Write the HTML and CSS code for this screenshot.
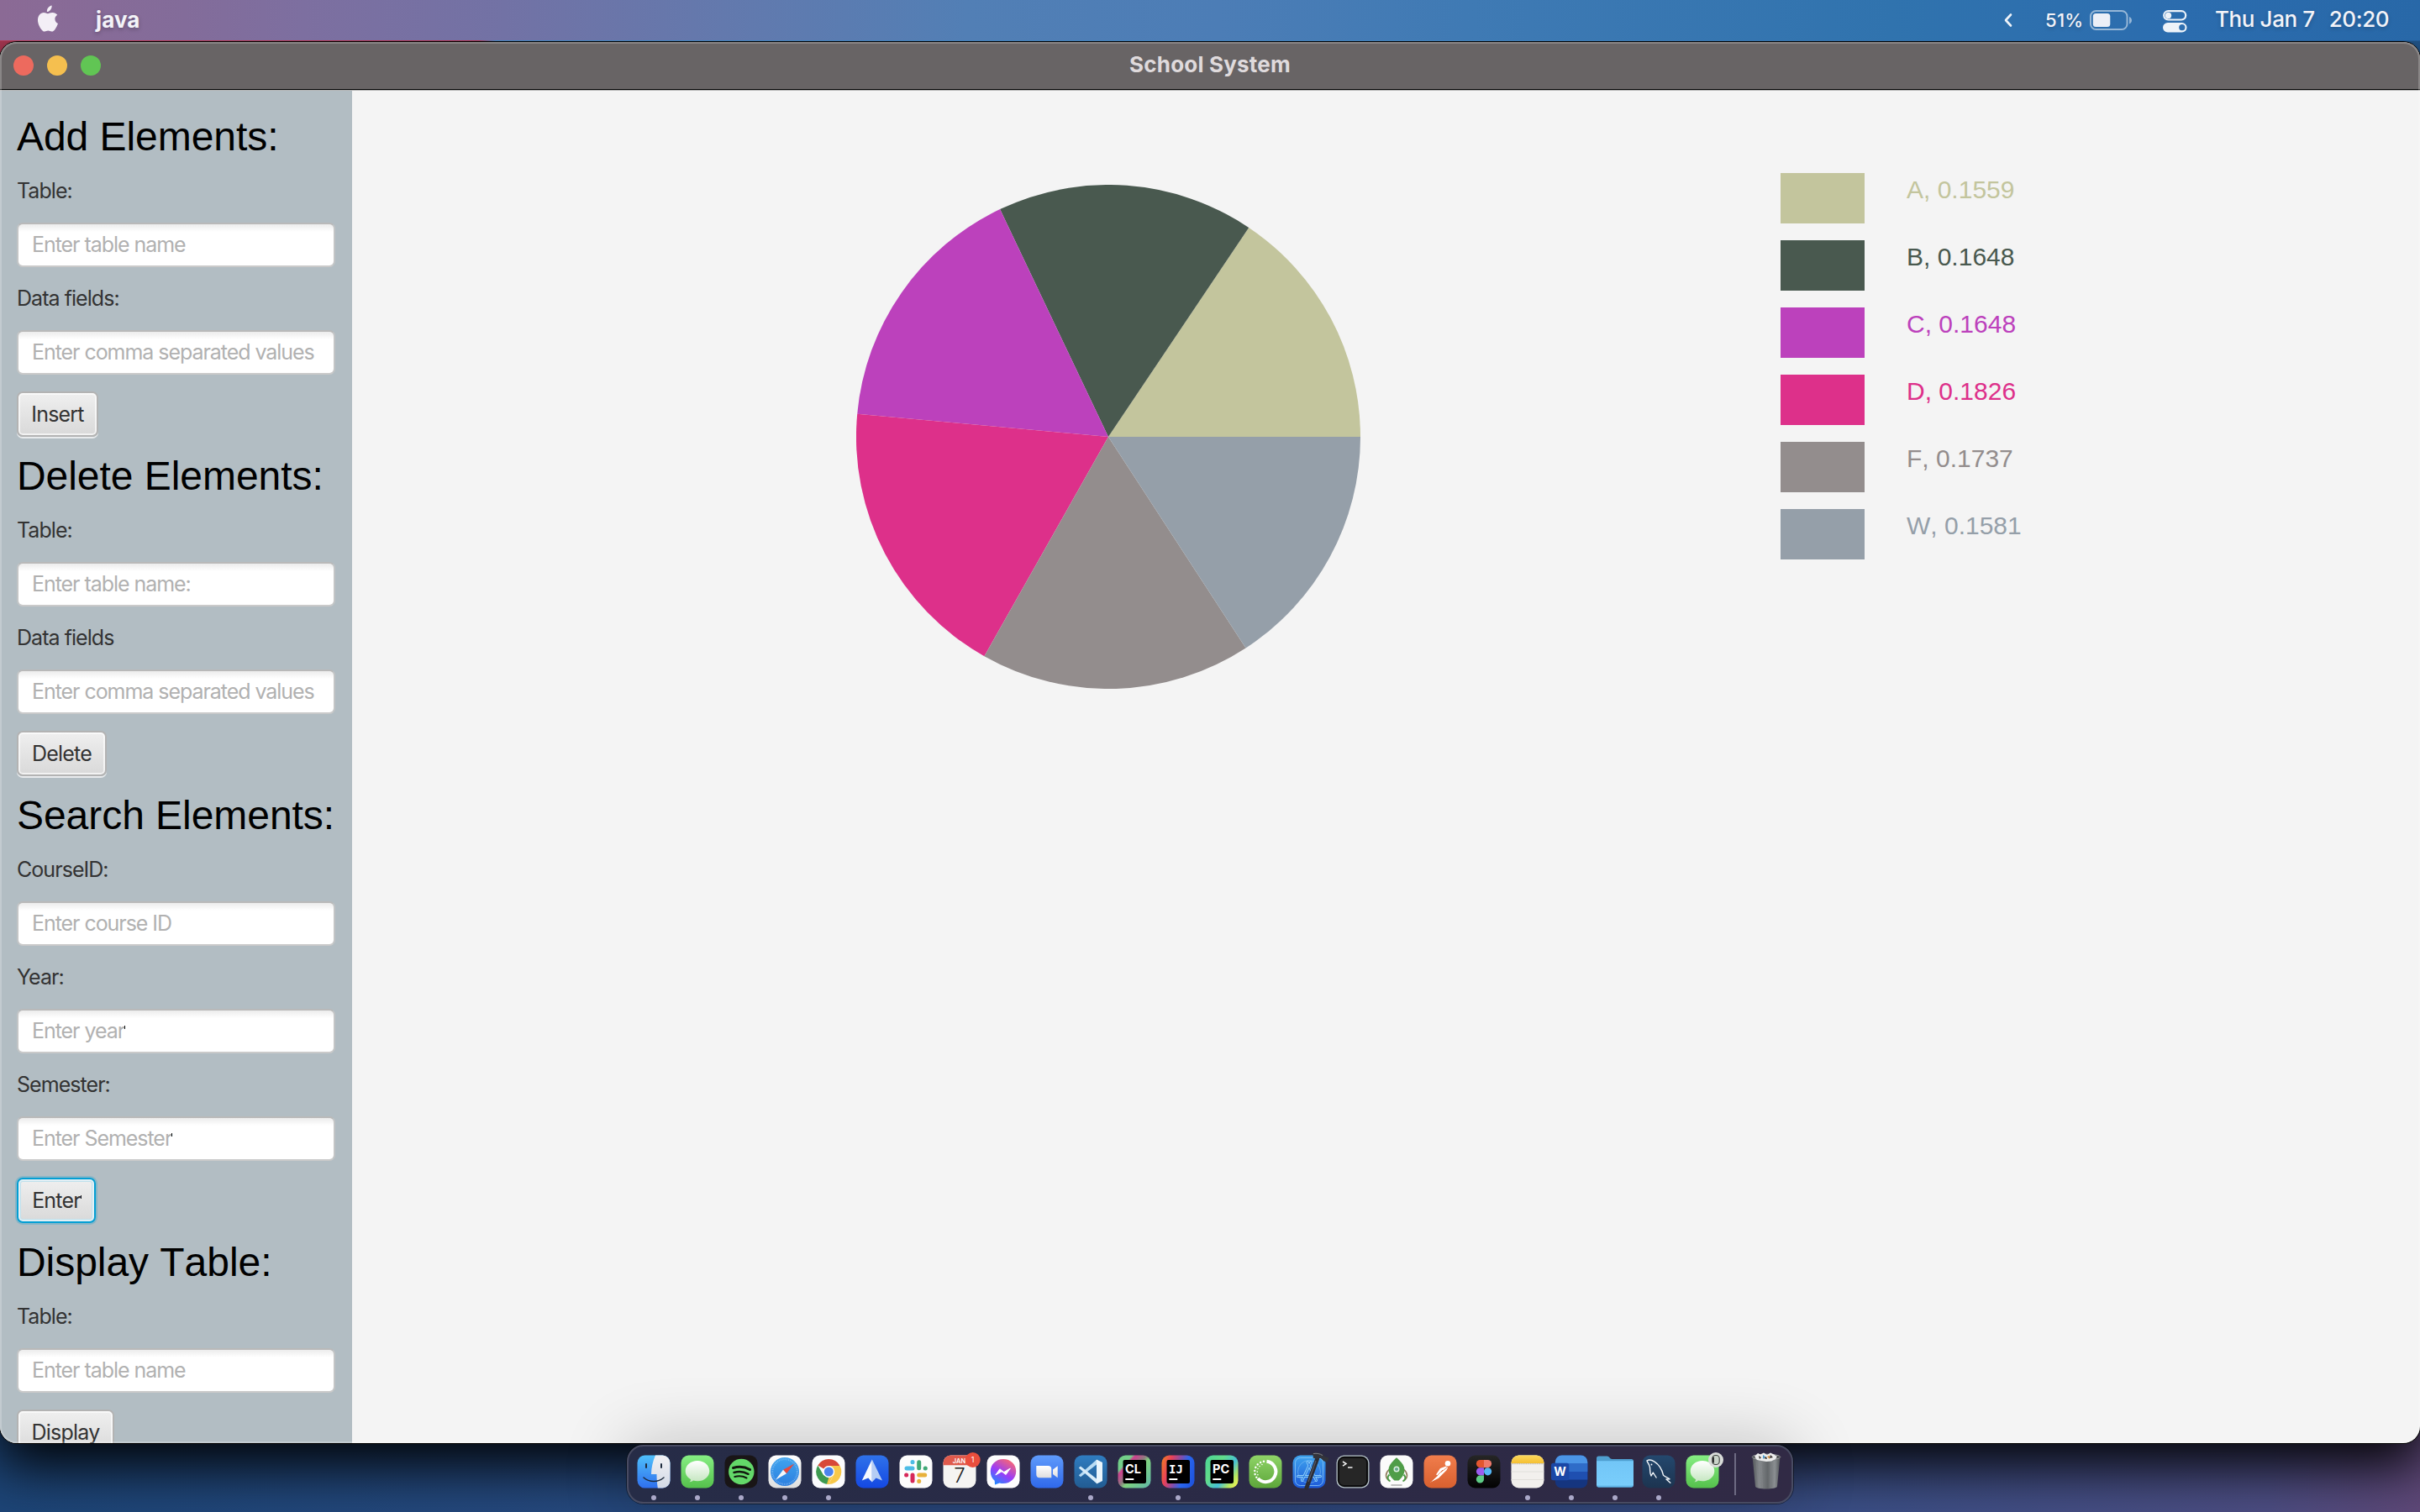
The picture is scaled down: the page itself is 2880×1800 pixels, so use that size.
FILE: index.html
```html
<!DOCTYPE html>
<html lang="en">
<head>
<meta charset="utf-8">
<title>School System</title>
<link rel="stylesheet" href="styles.css">
</head>
<body>
<svg class="defs" width="0" height="0">
  <defs>
    <linearGradient id="g-finder" x2="0" y2="1"><stop stop-color="#4fc0fb"/><stop offset="1" stop-color="#2f6fee"/></linearGradient>
    <linearGradient id="g-face" x2="0" y2="1"><stop stop-color="#f1f1f4"/><stop offset="1" stop-color="#d3dae6"/></linearGradient>
    <linearGradient id="g-msg" x2="0" y2="1"><stop stop-color="#86ee83"/><stop offset="1" stop-color="#55c14c"/></linearGradient>
    <linearGradient id="g-bubble" x2="0" y2="1"><stop stop-color="#fff"/><stop offset="1" stop-color="#c4e6c0"/></linearGradient>
    <linearGradient id="g-white" x2="0" y2="1"><stop stop-color="#fff"/><stop offset="1" stop-color="#dedede"/></linearGradient>
    <linearGradient id="g-safari" x2="0" y2="1"><stop stop-color="#3fa4ee"/><stop offset="1" stop-color="#2d7fe0"/></linearGradient>
    <linearGradient id="g-spark" x2="0" y2="1"><stop stop-color="#2f72ea"/><stop offset="1" stop-color="#1448e2"/></linearGradient>
    <linearGradient id="g-messenger" x1=".2" y1="1" x2=".8" y2="0"><stop stop-color="#1a8cff"/><stop offset=".45" stop-color="#9a3cf8"/><stop offset="1" stop-color="#ff6a6a"/></linearGradient>
    <linearGradient id="g-zoom" x2="0" y2="1"><stop stop-color="#5f9bfb"/><stop offset="1" stop-color="#2f68ea"/></linearGradient>
    <linearGradient id="g-vs" x2="0" y2="1"><stop stop-color="#2f7cc0"/><stop offset="1" stop-color="#225c92"/></linearGradient>
    <linearGradient id="g-cl" x1="0" y1="0" x2="1" y2=".9"><stop stop-color="#6fce86"/><stop offset=".24" stop-color="#74cf8a"/><stop offset=".3" stop-color="#cf3f8f"/><stop offset=".48" stop-color="#8f7a80"/><stop offset=".58" stop-color="#7fd27f"/><stop offset="1" stop-color="#62b9a6"/></linearGradient>
    <linearGradient id="g-ij" x1="0" y1=".3" x2="1" y2=".6"><stop stop-color="#f0702e"/><stop offset=".22" stop-color="#e8405a"/><stop offset=".5" stop-color="#7b4fb0"/><stop offset=".7" stop-color="#2a66ee"/><stop offset="1" stop-color="#1f55e0"/></linearGradient>
    <linearGradient id="g-pc" x1="0" y1=".2" x2="1" y2=".9"><stop stop-color="#4fd694"/><stop offset=".3" stop-color="#62dc8a"/><stop offset=".6" stop-color="#45c0d6"/><stop offset=".82" stop-color="#b4e860"/><stop offset="1" stop-color="#f6f254"/></linearGradient>
    <linearGradient id="g-ana" x2="0" y2="1"><stop stop-color="#8fd467"/><stop offset="1" stop-color="#5da63a"/></linearGradient>
    <linearGradient id="g-xcode" x2="0" y2="1"><stop stop-color="#3fa4ee"/><stop offset="1" stop-color="#1c58d8"/></linearGradient>
    <linearGradient id="g-postman" x2="0" y2="1"><stop stop-color="#f07d4c"/><stop offset="1" stop-color="#d9602f"/></linearGradient>
    <linearGradient id="g-black" x2="0" y2="1"><stop stop-color="#262626"/><stop offset="1" stop-color="#020202"/></linearGradient>
    <linearGradient id="g-yellow" x2="0" y2="1"><stop stop-color="#fcd95c"/><stop offset="1" stop-color="#f5bf32"/></linearGradient>
    <linearGradient id="g-folder" x2="0" y2="1"><stop stop-color="#72c6f7"/><stop offset=".9" stop-color="#79cdfb"/><stop offset="1" stop-color="#55abdf"/></linearGradient>
    <linearGradient id="g-mysql" x2="0" y2="1"><stop stop-color="#24486e"/><stop offset="1" stop-color="#1c3450"/></linearGradient>
    <linearGradient id="g-trash"><stop stop-color="#55595c"/><stop offset=".25" stop-color="#85898c"/><stop offset=".55" stop-color="#63676a"/><stop offset=".8" stop-color="#8a8e91"/><stop offset="1" stop-color="#54585b"/></linearGradient>
  </defs>
</svg>
<div class="desktop">
  <header class="menubar">
    <svg class="apple" width="28" height="34" viewBox="0 0 28 34"><path fill="#f3eff6" d="M18.600.5c.3 2.100-.5 4-1.700 5.400-1.200 1.400-2.700 2.100-4 2-.2-2 .6-3.900 1.800-5.200C15.800 1.500 17.300.700 18.600.5zM25.300 11.800c-1.900 1.200-3 2.900-2.900 5 .1 2.600 1.500 4.400 3.600 5.300-.8 2.400-2 4.700-3.500 6.800-1 1.400-2.300 2.700-4 2.700-1.600 0-2.200-1-4.200-1s-2.700 1-4.200 1c-1.700 0-3-1.400-4.100-2.900C2.600 24.200 1.100 18.500 2.500 14.300c1-3.100 3.600-5.200 6.500-5.300 1.900 0 3.500 1.200 4.900 1.200 1.300 0 3.100-1.300 5.600-1.200 2.300.1 4.500 1.100 5.800 2.800z"/></svg>
    <span class="app-name">java</span>
    <div class="status">
      <svg class="chevron" width="12" height="20" viewBox="0 0 12 20"><path d="M9 3.500 3 10l6 6.500" fill="none" stroke="#eef3f9" stroke-width="2.600" stroke-linecap="round" stroke-linejoin="round"/></svg>
      <span class="percent">51%</span>
      <svg class="battery" width="52" height="26" viewBox="0 0 52 26"><rect x="2" y="2" width="43.500" height="22" rx="6.500" fill="none" stroke="#fff" stroke-opacity=".5" stroke-width="2"/><rect x="4.800" y="5" width="20.500" height="16" rx="3.500" fill="#eceff7"/><path d="M48 9c4 1.500 4 7 0 8.500z" fill="#fff" fill-opacity=".5"/></svg>
      <svg class="control" width="30" height="28" viewBox="0 0 30 28"><rect x="2.200" y="2.200" width="26" height="10.300" rx="5.150" fill="none" stroke="#eef3f9" stroke-width="2.200"/><circle cx="7.500" cy="7.400" r="3.700" fill="#eef3f9"/><rect x="1" y="16" width="28.500" height="11.500" rx="5.750" fill="#eef3f9"/><circle cx="23.800" cy="21.700" r="3.600" fill="#2f6fb0"/></svg>
      <span class="clock"><span>Thu Jan 7</span><span>20:20</span></span>
    </div>
  </header>

  <main class="window">
    <div class="titlebar">
      <div class="lights"><i class="light red"></i><i class="light yellow"></i><i class="light green"></i></div>
      <span class="title">School System</span>
    </div>
    <div class="content">
      <aside class="sidebar">
        <h2>Add Elements:</h2>
        <label>Table:</label>
        <div class="field"><span>Enter table name</span></div>
        <label>Data fields:</label>
        <div class="field"><span>Enter comma separated values</span></div>
        <button class="btn btn-insert">Insert</button>
        <h2>Delete Elements:</h2>
        <label>Table:</label>
        <div class="field"><span>Enter table name:</span></div>
        <label>Data fields</label>
        <div class="field"><span>Enter comma separated values</span></div>
        <button class="btn btn-delete">Delete</button>
        <h2>Search Elements:</h2>
        <label>CourseID:</label>
        <div class="field"><span>Enter course ID</span></div>
        <label>Year:</label>
        <div class="field"><span class="tick">Enter year</span></div>
        <label>Semester:</label>
        <div class="field"><span class="tick">Enter Semester</span></div>
        <button class="btn btn-enter focused"><span class="tick">Enter</span></button>
        <h2>Display Table:</h2>
        <label>Table:</label>
        <div class="field"><span>Enter table name</span></div>
        <button class="btn btn-display">Display</button>
      </aside>
      <section class="chart">
        <svg class="pie" width="600" height="600" viewBox="0 0 600 600">
          <path fill="#c3c59d" d="M300 300H600A300 300 0 0 0 467.200 50.900z"/>
          <path fill="#49594f" d="M300 300 467.200 50.900A300 300 0 0 0 171.100 29.100z"/>
          <path fill="#bc41bc" d="M300 300 171.100 29.100A300 300 0 0 0 1.200 272.700z"/>
          <path fill="#dd308a" d="M300 300 1.200 272.700A300 300 0 0 0 152.400 561.200z"/>
          <path fill="#938d8d" d="M300 300 152.400 561.200A300 300 0 0 0 463.600 551.500z"/>
          <path fill="#959fa9" d="M300 300 463.600 551.500A300 300 0 0 0 600 300z"/>
        </svg>
        <ul class="legend">
          <li class="grade-a"><i></i><span>A, 0.1559</span></li>
          <li class="grade-b"><i></i><span>B, 0.1648</span></li>
          <li class="grade-c"><i></i><span>C, 0.1648</span></li>
          <li class="grade-d"><i></i><span>D, 0.1826</span></li>
          <li class="grade-f"><i></i><span>F, 0.1737</span></li>
          <li class="grade-w"><i></i><span>W, 0.1581</span></li>
        </ul>
      </section>
    </div>
  </main>

  <nav class="dock">
    <!-- Finder -->
    <div class="app running"><svg viewBox="0 0 52 52"><rect x="6.500" y="6.500" width="39" height="39" rx="9" fill="url(#g-finder)"/><path d="M28 6.500H36.500a9 9 0 0 1 9 9V36.500a9 9 0 0 1-9 9H30.800C30 40 29.500 35 29.500 29H23C23.200 21 25 13 28 6.500z" fill="url(#g-face)"/><path d="M17 17v4M35 17v4" stroke="#1d2a3c" stroke-width="2" stroke-linecap="round"/><path d="M14 33c7 6 17 6 24 0" fill="none" stroke="#1d2a3c" stroke-width="1.500" stroke-linecap="round"/></svg></div>
    <!-- Messages -->
    <div class="app running"><svg viewBox="0 0 52 52"><rect x="6.500" y="6.500" width="39" height="39" rx="9" fill="url(#g-msg)"/><path d="M26 13c8 0 14.300 5.400 14.300 12.200S34 37.300 26 37.300c-1.800 0-3.400-.2-5-.7-1.200 1-2.600 1.700-4.500 1.800.9-.9 1.500-2 1.600-3.200-3.900-2.200-6.400-5.900-6.400-10C11.700 18.400 18 13 26 13z" fill="url(#g-bubble)"/></svg></div>
    <!-- Spotify -->
    <div class="app running"><svg viewBox="0 0 52 52"><rect x="6.500" y="6.500" width="39" height="39" rx="9" fill="#191516"/><circle cx="26.300" cy="26" r="15.200" fill="#63d869"/><path d="M16.500 21.500c6.500-1.900 14-1.300 20 2" fill="none" stroke="#12180f" stroke-width="3" stroke-linecap="round"/><path d="M17.500 27c5.500-1.500 12-1 17 1.800" fill="none" stroke="#12180f" stroke-width="2.500" stroke-linecap="round"/><path d="M18.300 32c4.700-1.200 10-.8 14.200 1.500" fill="none" stroke="#12180f" stroke-width="2" stroke-linecap="round"/></svg></div>
    <!-- Safari -->
    <div class="app running"><svg viewBox="0 0 52 52"><rect x="6.500" y="6.500" width="39" height="39" rx="9" fill="url(#g-white)"/><circle cx="26" cy="26" r="17" fill="url(#g-safari)"/><circle cx="26" cy="26" r="14.800" fill="none" stroke="#cfe6fb" stroke-width="2" stroke-opacity=".6" stroke-dasharray=".6 1.340"/><path d="M37.300 16.500 28 28.200 24 23.800z" fill="#e8493c"/><path d="M15 35.800 24 23.800l4 4.400z" fill="#f5f7fa"/></svg></div>
    <!-- Chrome -->
    <div class="app running"><svg viewBox="0 0 52 52"><rect x="6.500" y="6.500" width="39" height="39" rx="9" fill="#fbfcfe"/><path d="M26.300 26 13.300 18.500A15 15 0 0 1 39.300 18.500z" fill="#d8493a"/><path d="M26.300 19h13.300A15 15 0 0 1 26.300 41l6-11.500z" fill="#f7c84a"/><path d="M13.300 18.500 20 30l6.300 3.200L26.300 41A15 15 0 0 1 13.300 18.500z" fill="#3d9a50"/><path d="M26.300 33 32.300 29.500 26 41h-2z" fill="#f7c84a"/><circle cx="26.300" cy="26" r="6.900" fill="#fff"/><circle cx="26.300" cy="26" r="5.500" fill="#4c84ee"/></svg></div>
    <!-- Spark -->
    <div class="app"><svg viewBox="0 0 52 52"><rect x="6.500" y="6.500" width="39" height="39" rx="9" fill="url(#g-spark)"/><path d="M25.800 11.500 13.800 36.500l7.500-3 4.500 5z" fill="#f6f9fe"/><path d="M25.800 11.500 38 36.500l-7.500-3-4.700 5z" fill="#b5cdf4"/></svg></div>
    <!-- Slack -->
    <div class="app"><svg viewBox="0 0 52 52"><rect x="6.500" y="6.500" width="39" height="39" rx="9" fill="#fdfdfd"/><g stroke-width="5" stroke-linecap="round"><path d="M15 22h7M22 14.600v.1" stroke="#4dbce6"/><path d="M29.700 14.800v7M37.200 22h.1" stroke="#40a876"/><path d="M29.700 30h7M29.700 37.300v.1" stroke="#e8b13c"/><path d="M22 30v7M14.600 30h.1" stroke="#d6285a"/></g></svg></div>
    <!-- Calendar -->
    <div class="app"><svg viewBox="0 0 52 52"><rect x="6.500" y="6.500" width="39" height="39" rx="9" fill="#f5f4f2"/><path d="M6.500 18.200v-2.700a9 9 0 0 1 9-9h21a9 9 0 0 1 9 9v2.700z" fill="#e05a4c"/><text x="25.500" y="15.600" class="cal-month">JAN</text><text x="26" y="39.300" class="cal-day">7</text><circle cx="41.700" cy="12" r="9" fill="#ea4e3d"/><text x="41.700" y="15.200" class="cal-badge">1</text></svg></div>
    <!-- Messenger -->
    <div class="app"><svg viewBox="0 0 52 52"><rect x="6.500" y="6.500" width="39" height="39" rx="9" fill="#fdfdfe"/><path d="M26 11c8.700 0 15.200 6.200 15.200 14.500S34.700 40 26 40c-1.600 0-3-.2-4.400-.6L16 41.600l-.3-4.800C12.500 34.200 10.800 30.200 10.800 25.500 10.800 17.200 17.300 11 26 11z" fill="url(#g-messenger)"/><path d="m16.800 30 5-7.200 5 3.700 7.500-4.500-5.200 7.500-5-3.700z" fill="#fff" stroke="#fff" stroke-linejoin="round"/></svg></div>
    <!-- Zoom -->
    <div class="app"><svg viewBox="0 0 52 52"><rect x="6.500" y="6.500" width="39" height="39" rx="9" fill="url(#g-zoom)"/><path d="M13.300 19h14a4 4 0 0 1 4 4v10.300h-14a4 4 0 0 1-4-4zM33 23.500l5.700-4.300v14L33 29z" fill="url(#g-white)"/></svg></div>
    <!-- Visual Studio Code -->
    <div class="app running"><svg viewBox="0 0 52 52"><rect x="6.500" y="6.500" width="39" height="39" rx="9" fill="url(#g-vs)"/><path d="M33 17.500 14 32.200l-2.200-2L33 11.700z" fill="#b9dcf4"/><path d="M33 34.500 14 19.600l-2.200 2L33 40z" fill="#d8ecf9"/><path d="m33 11.500 7 3.500v22l-7 3.500z" fill="#eaf5fc"/></svg></div>
    <!-- CLion -->
    <div class="app"><svg viewBox="0 0 52 52"><rect x="6.500" y="6.500" width="39" height="39" rx="9" fill="url(#g-cl)"/><rect x="12.500" y="12" width="27.500" height="28" rx="2" fill="#000"/><text x="15" y="27.700" class="jb">CL</text><path d="M15.300 35h10" stroke="#fff" stroke-width="2"/></svg></div>
    <!-- IntelliJ IDEA -->
    <div class="app running"><svg viewBox="0 0 52 52"><rect x="6.500" y="6.500" width="39" height="39" rx="9" fill="url(#g-ij)"/><rect x="12.500" y="12" width="27.500" height="28" rx="2" fill="#000"/><text x="15" y="27.700" class="jb mono">IJ</text><path d="M15.300 35h10" stroke="#fff" stroke-width="2"/></svg></div>
    <!-- PyCharm -->
    <div class="app"><svg viewBox="0 0 52 52"><rect x="6.500" y="6.500" width="39" height="39" rx="9" fill="url(#g-pc)"/><rect x="12.500" y="12" width="27.500" height="28" rx="2" fill="#000"/><text x="15" y="27.700" class="jb">PC</text><path d="M15.300 35h10" stroke="#fff" stroke-width="2"/></svg></div>
    <!-- Anaconda -->
    <div class="app"><svg viewBox="0 0 52 52"><rect x="6.500" y="6.500" width="39" height="39" rx="9" fill="url(#g-ana)"/><path d="M27.500 13.800A12.200 12.200 0 1 1 17 34" fill="none" stroke="#fff" stroke-width="4"/><path d="M24 13.800A12.200 12.200 0 0 0 15.500 33" fill="none" stroke="#fff" stroke-width="2.400" stroke-linecap="round" stroke-dasharray=".1 4"/><path d="M22 17.500A9.500 9.500 0 0 0 17.500 31" fill="none" stroke="#fff" stroke-width="1.500" stroke-linecap="round" stroke-dasharray=".1 3.500"/></svg></div>
    <!-- Xcode -->
    <div class="app"><svg viewBox="0 0 52 52"><rect x="6.500" y="6.500" width="39" height="39" rx="9" fill="url(#g-xcode)"/><rect x="9.500" y="9.500" width="33" height="33" rx="6" fill="none" stroke="#8cc8f6" stroke-width=".8"/><circle cx="26" cy="26" r="13.500" fill="none" stroke="#8cc8f6" stroke-width=".5"/><path d="m28 14.500-10.500 22M24 14.500l10.500 22M12.500 31.500h27" stroke="#8fd0fa" stroke-width="3" stroke-linecap="round"/><path d="m28 14.500-10.500 22M24 14.500l10.500 22M12.500 31.500h27" stroke="#2f80e2" stroke-width="1.200" stroke-linecap="round"/><path d="M23 45 35.500 11" stroke="#2b2c33" stroke-width="5" stroke-linecap="round"/><path d="m25 38 9-25" stroke="#575a66" stroke-width="1.200"/><path d="M28.500 4.500c5-2 10-1.500 14 1l2 2.500 5 1.500-1.500 5-4.500-1-3-3c-2-.8-3.500-.5-5 .5l-5-1.500c1-2 0-4-2-5z" fill="#33343b"/><path d="M31 4.600c4-.8 8 0 11 2" fill="none" stroke="#85878f" stroke-width=".9"/></svg></div>
    <!-- Terminal -->
    <div class="app"><svg viewBox="0 0 52 52"><rect x="6.500" y="6.500" width="39" height="39" rx="9" fill="#b9c6cc"/><rect x="7.800" y="7.800" width="36.400" height="36.400" rx="8" fill="#0c0c0d"/><rect x="10" y="10" width="32" height="32" rx="5" fill="#262626"/><path d="m14 14 4 2.600-4 2.600M20 21h5.500" fill="none" stroke="#f2f2f2" stroke-width="1.500"/></svg></div>
    <!-- MongoDB client -->
    <div class="app"><svg viewBox="0 0 52 52"><rect x="6.500" y="6.500" width="39" height="39" rx="9" fill="#fbfbfb"/><path d="M17 23.500c-5 5-4.500 10 .5 13.500M35 23.500c5 5 4.500 10-.5 13.500" fill="none" stroke="#8f7d5d" stroke-width="1.600"/><path d="M17.500 29.500c-3 3-2.500 6 1 8M34.500 29.500c3 3 2.500 6-1 8" fill="none" stroke="#4b9b46" stroke-width="2"/><path d="M26 9.300c4.500 4 9.500 9 9.500 14.700S31.500 34 28.500 36.500h-5C20.500 34 16.500 29.700 16.500 24S21.500 13.300 26 9.300z" fill="#4f9d48"/><circle cx="26" cy="23" r="3.500" fill="#dff0e3"/><circle cx="26" cy="23" r="2.100" fill="#66a98b"/><path d="M20 42h12" stroke="#aaa" stroke-width="1.500" stroke-linecap="round"/></svg></div>
    <!-- Postman -->
    <div class="app"><svg viewBox="0 0 52 52"><rect x="6.500" y="6.500" width="39" height="39" rx="9" fill="url(#g-postman)"/><circle cx="35" cy="16.300" r="3.300" fill="#fff"/><path d="M33 19.500 26 22l-5 7.500 2.500 1L14 38.800l10-5 9.500-9.500 1.500-3z" fill="#fff"/><path d="m15 38 14-14M34 21l-7 5.500" stroke="#e06e3e" stroke-width=".8"/></svg></div>
    <!-- Figma -->
    <div class="app"><svg viewBox="0 0 52 52"><rect x="6.500" y="6.500" width="39" height="39" rx="9" fill="url(#g-black)"/><path d="M26 12h-4.500a4.600 4.600 0 0 0 0 9.200H26z" fill="#e2562f"/><path d="M26 12h4.500a4.600 4.600 0 0 1 0 9.200H26z" fill="#ee7a6b"/><path d="M26 21.200h-4.500a4.600 4.600 0 0 0 0 9.200H26z" fill="#9b5cf0"/><circle cx="30.600" cy="25.800" r="4.600" fill="#54b6f6"/><path d="M26 30.400h-4.500a4.600 4.600 0 1 0 4.500 4.600z" fill="#5ecb85"/></svg></div>
    <!-- Notes -->
    <div class="app running"><svg viewBox="0 0 52 52"><rect x="6.500" y="6.500" width="39" height="39" rx="9" fill="#f2f0ed"/><path d="M6.500 16v-.5a9 9 0 0 1 9-9h21a9 9 0 0 1 9 9v.5z" fill="url(#g-yellow)"/><path d="M6.500 16.700h39" stroke="#b4aea2" stroke-dasharray="1 .6"/><path d="M6.500 26h39M6.500 35.500h39" stroke="#dcdad6" stroke-width=".8"/></svg></div>
    <!-- Word -->
    <div class="app running"><svg viewBox="0 0 52 52"><rect x="6.800" y="6.500" width="38.500" height="39" rx="8" fill="#15357f"/><path d="M6.800 35.500V16h38.500v19.500z" fill="#1f4fb0"/><path d="M6.800 26V16h38.500v10z" fill="#2f6cc8"/><path d="M6.800 16v-1.500a8 8 0 0 1 8-8h22.500a8 8 0 0 1 8 8V16z" fill="#4b95e6"/><rect x="2" y="15.700" width="21.300" height="20.500" rx="2.500" fill="#1a47a6"/><text x="12.600" y="31.300" class="word-w">W</text></svg></div>
    <!-- Folder -->
    <div class="app running"><svg viewBox="0 0 52 52"><path d="M4 10a2.500 2.500 0 0 1 2.500-2.500h10c2.500 0 3.500 3.500 6 3.500h23A2.500 2.500 0 0 1 48 13.500V20H4z" fill="#4f9fd0"/><path d="M4 13.300h44v29a2.400 2.400 0 0 1-2.400 2.400H6.400A2.400 2.400 0 0 1 4 42.300z" fill="url(#g-folder)"/></svg></div>
    <!-- MySQL Workbench -->
    <div class="app running"><svg viewBox="0 0 52 52"><rect x="6.500" y="6.500" width="39" height="39" rx="9" fill="url(#g-mysql)"/><path d="M12 13c2.500-1.800 6-.8 9 1.200 6 3.800 9 9.500 10.500 16 1.500 2 5 2.500 7.500 4.500l-4 .3 4.800 4.200M12 13c1 3 3 4.500 3.500 8 .3 3.500-.3 6 1.500 10l2.300-4 3.800 6" fill="none" stroke="#f1f5f9" stroke-width="1.400" stroke-linejoin="round" stroke-linecap="round"/><circle cx="17.500" cy="17.500" r=".9" fill="#fff"/></svg></div>
    <!-- Messages with a counter -->
    <div class="app"><svg viewBox="0 0 52 52"><rect x="6.500" y="6.500" width="39" height="39" rx="9" fill="url(#g-msg)"/><path d="M26 13c8 0 14.300 5.400 14.300 12.200S34 37.300 26 37.300c-1.800 0-3.400-.2-5-.7-1.200 1-2.600 1.700-4.500 1.800.9-.9 1.500-2 1.600-3.200-3.900-2.200-6.400-5.900-6.400-10C11.700 18.400 18 13 26 13z" fill="url(#g-bubble)"/><circle cx="42" cy="12" r="9" fill="#d9dcd9"/><rect x="37.800" y="6.500" width="8.400" height="11" rx="3.800" fill="#c9d3c9" stroke="#3c403c" stroke-width="1.100"/><path d="M39 8.500v7" stroke="#222" stroke-width="1.800"/></svg></div>
    <span class="separator"></span>
    <!-- Trash -->
    <div class="app"><svg viewBox="0 0 52 52"><path d="M9.500 8h33L39 43.500c-.3 4-25.700 4-26 0z" fill="url(#g-trash)"/><path d="M14 13l3 30M20 13l1.500 32M32 13l-1.500 32M38 13l-3 30" stroke="#a4a8aa" stroke-opacity=".12"/><ellipse cx="26" cy="8.500" rx="16.700" ry="3.300" fill="#3c3f42" stroke="#a8abad"/><path d="m12 8 4-4 3 1.500 4-2 4 2.500 4-2.500 4 2 4 2.500-2 3-5 2.500-6 .5-6-1-5-1z" fill="#eceded"/><path d="m17 7 3 2-2 2zM31 6l3 3-4 1zM23 10l3-2 1 3z" fill="#35302e"/><path d="m22 6 3 2-3 3z" fill="#4f9cd0"/><path d="m27 8 3-1v4z" fill="#d8913f"/></svg></div>
  </nav>
</div>
</body>
</html>
```
FILE: styles.css
```css
* { box-sizing: border-box; }

body {
  margin: 0;
  font-family: Inter, "Liberation Sans", sans-serif;
}

.defs { display: block; position: absolute; }
svg { display: block; flex: none; }

/* ---------- desktop ---------- */
.desktop {
  width: 2880px;
  height: 1800px;
  overflow: hidden;
  display: flex;
  flex-direction: column;
  gap: 2px;
  background:
    linear-gradient(90deg, #b23b57 0, #a8304c 570px, #3f7fb8 590px, #3f7fb8 1700px, #235b94 2880px) 0 0 / 100% 100px no-repeat,
    linear-gradient(90deg, #1d4577 0, #284a80 900px, #2f4a82 1500px, #3b4f86 2200px, #4c4d82 2700px, #5e4878 2880px);
}

/* ---------- menu bar ---------- */
.menubar {
  height: 48px;
  flex: none;
  display: flex;
  align-items: center;
  padding: 0 37px 0 43px;
  color: #f3f3f8;
  background: linear-gradient(90deg, #8b6a95 0, #836c9a 220px, #7d6fa0 360px, #7272a5 600px, #6379ad 860px, #527fb5 1150px, #4c7db6 1450px, #3f7ab4 1750px, #3073ae 2250px, #2b6cae 2600px, #2868a8 2880px);
}
.apple { margin-top: -3px; }
.app-name {
  margin: -2px 0 0 43px;
  font-size: 26px;
  font-weight: 700;
  letter-spacing: .1px;
  text-shadow: 0 2px 5px rgba(0, 0, 0, .25);
}
.status {
  margin-left: auto;
  display: flex;
  align-items: center;
  text-shadow: 0 2px 5px rgba(0, 0, 0, .2);
}
.chevron { margin-top: -1px; }
.percent {
  width: 52px;
  margin-left: 38px;
  font-size: 22px;
  font-weight: 500;
  letter-spacing: .3px;
}
.control { margin: 2px 33px 0 35px; }
.clock {
  width: 207px;
  display: flex;
  gap: 17px;
  margin-top: -3px;
  font-size: 26px;
  font-weight: 450;
  letter-spacing: -.4px;
  white-space: nowrap;
}

/* ---------- window ---------- */
.window {
  position: relative;
  height: 1668px;
  flex: none;
  display: flex;
  flex-direction: column;
  overflow: hidden;
  border-radius: 20px;
  background: #f4f4f4;
  box-shadow: 0 0 0 1px #000, 0 24px 64px 4px rgba(0, 0, 0, .95);
  clip-path: inset(-1px -40px -120px -40px);
}
.window::after {
  content: "";
  position: absolute;
  inset: 0;
  border-radius: 20px;
  box-shadow: inset 0 0 0 2px rgba(255, 255, 255, .22);
  pointer-events: none;
}
.titlebar {
  height: 58px;
  flex: none;
  display: flex;
  align-items: center;
  padding: 0 16px 2px;
  background: #686465;
  border-bottom: 1px solid #b4b4b4;
  box-shadow: inset 0 -1px #000;
}
.lights { flex: 1; display: flex; gap: 16px; }
.light { width: 24px; height: 24px; border-radius: 50%; }
.red { background: #ed6a5e; }
.yellow { background: #f5bf4f; }
.green { background: #61c554; }
.title {
  color: #dfdadc;
  font-size: 26px;
  font-weight: 700;
  letter-spacing: .2px;
  margin-top: -3px;
}
.titlebar::after { content: ""; flex: 1; }
.content { flex: 1; display: flex; min-height: 0; }

/* ---------- sidebar ---------- */
.sidebar {
  width: 419px;
  flex: none;
  display: flex;
  flex-direction: column;
  align-items: flex-start;
  gap: 20px;
  padding: 27px 20px 0;
  overflow: hidden;
  background: #b2bdc3;
  color: #333;
  font-size: 25px;
  letter-spacing: -.95px;
  white-space: nowrap;
}
.sidebar > * { flex: none; }
.sidebar h2 {
  margin: 0;
  height: 55px;
  color: #000;
  font: 400 48px/55px "Liberation Sans", Arial, sans-serif;
  font-kerning: none;
  letter-spacing: -.05px;
}
.sidebar label { height: 35px; line-height: 35px; }
.field {
  width: 379px;
  height: 53px;
  display: flex;
  align-items: center;
  padding: 0 0 2px 16px;
  border: 2px solid;
  border-color: #b9b9b9 #c3c5c6 #cacaca;
  border-radius: 7px;
  background: linear-gradient(#ececec, #fff 9px);
  color: #b1b1b1;
  letter-spacing: -1.05px;
}
.btn {
  height: 54px;
  margin: 0 0 -1px;
  padding: 0;
  border: 2px solid #b3b3b3;
  border-radius: 7px;
  background: linear-gradient(#efefef, #d9d9d9);
  box-shadow: inset 0 0 0 2px rgba(255, 255, 255, .65), 0 2px rgba(255, 255, 255, .7);
  color: #333;
  font: 25px Inter, "Liberation Sans", sans-serif;
  letter-spacing: -.8px;
}
.btn-insert { width: 97px; }
.btn-delete { width: 107px; }
.btn-enter { width: 94px; }
.btn-display { width: 116px; }
.btn.focused {
  border-color: #039ed3;
  box-shadow: inset 0 0 0 2px #e3f0f5, inset 0 0 0 3px #bfe0ec, 0 0 0 2px rgba(3, 158, 211, .25);
}
/* short dark stroke left behind at the end of some strings */
.tick { position: relative; }
.tick::after {
  content: "";
  position: absolute;
  right: -1px;
  top: 9px;
  width: 1px;
  height: 4px;
  background: #111;
}

/* ---------- chart ---------- */
.chart {
  flex: 1;
  display: flex;
  align-items: flex-start;
  gap: 500px;
  padding-left: 600px;
}
.pie { margin-top: 112px; }
.legend {
  list-style: none;
  margin: 98px 0 0;
  padding: 0;
  display: flex;
  flex-direction: column;
  gap: 20px;
}
.legend li {
  height: 60px;
  display: flex;
  gap: 50px;
  font: 30px/40px "Liberation Sans", Arial, sans-serif;
  font-kerning: none;
}
.legend i { width: 100px; background: currentColor; }
.grade-a { color: #c3c59d; }
.grade-b { color: #49594f; }
.grade-c { color: #bc41bc; }
.grade-d { color: #dd308a; }
.grade-f { color: #938d8d; }
.grade-w { color: #959fa9; }

/* ---------- dock ---------- */
.dock {
  position: relative;
  align-self: center;
  width: 1388px;
  height: 70px;
  flex: none;
  display: flex;
  padding: 4px;
  border: 2px solid #484b62;
  border-radius: 20px;
  background: linear-gradient(90deg, #262c47, #2b2a46 55%, #312a45);
  box-shadow: 0 0 0 1px rgba(0, 0, 0, .45), 0 0 80px rgba(0, 0, 0, .24);
}
.app {
  width: 52px;
  flex: none;
  display: flex;
  flex-direction: column;
  align-items: center;
  gap: 2px;
}
.app svg { width: 52px; height: 52px; overflow: visible; }
.running::after {
  content: "";
  width: 6px;
  height: 6px;
  flex: none;
  border-radius: 50%;
  background: #aaa8c8;
}
.separator {
  width: 2px;
  height: 50px;
  margin: 4px 10px 0 12px;
  background: #6d6a82;
}
text { text-anchor: middle; font-family: Inter, sans-serif; }
.cal-month { font-size: 7.500px; font-weight: 600; fill: #fff; }
.cal-day { font-size: 24px; font-weight: 300; fill: #222; }
.cal-badge { font-size: 9px; fill: #fff; }
.jb { text-anchor: start; font-size: 14.500px; font-weight: 700; fill: #fff; }
.mono { font-family: "DejaVu Sans Mono", monospace; font-size: 14px; }
.word-w { font-size: 14px; font-weight: 700; fill: #fff; }
```
